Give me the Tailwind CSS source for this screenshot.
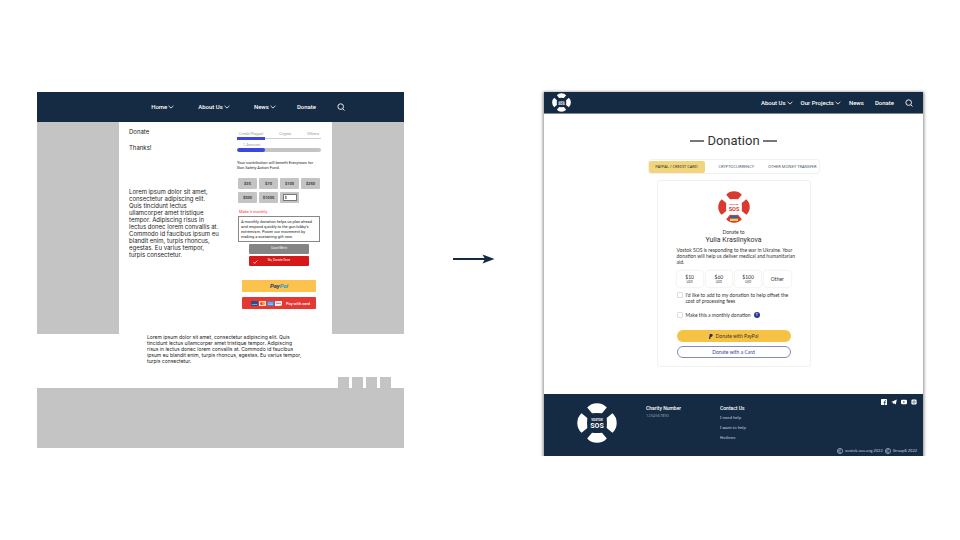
<!DOCTYPE html>
<html lang="en">
<head>
<meta charset="utf-8">
<meta name="viewport" content="width=device-width, initial-scale=1">
<title>Donation page: before and after</title>
<script src="https://cdn.jsdelivr.net/npm/@tailwindcss/browser@4"></script>
</head>
<body class="bg-white font-[Roboto,sans-serif] text-[#333]">
<svg class="hidden" aria-hidden="true">
  <symbol id="chevron" viewBox="0 0 6 4"><path d="M.6 .8 3 3.1 5.4 .8" fill="none" stroke="currentColor" stroke-width=".8"/></symbol>
  <symbol id="search" viewBox="0 0 8 8"><circle cx="3.7" cy="3.6" r="2.8" fill="none" stroke="currentColor" stroke-width=".9"/><path d="m5.8 5.8 1.7 1.7" stroke="currentColor" stroke-width=".9"/></symbol>
  <symbol id="ring" viewBox="0 0 40 40">
    <g fill="currentColor">
      <path id="petal" d="M10.200 4.600Q14 .3 20 .3T29.800 4.600L25 10.300Q20 9.800 15 10.300Z"/>
      <use href="#petal" transform="rotate(90 20 20)"/>
      <use href="#petal" transform="rotate(180 20 20)"/>
      <use href="#petal" transform="rotate(270 20 20)"/>
      <text x="20" y="18" font-size="3" font-weight="700" text-anchor="middle" font-family="Roboto">VOSTOK</text>
      <text x="20" y="24.500" font-size="7" font-weight="700" text-anchor="middle" font-family="Roboto">SOS</text>
    </g>
  </symbol>
</svg>

<main class="grid grid-cols-[367fr_140fr_379fr] items-start px-[37px] pt-[92px]">

  <!-- Old design -->
  <section class="bg-white" aria-label="Previous design">
    <nav class="flex h-[30px] items-center justify-end gap-[21px] bg-[#152b43] pr-[59px] text-[6px] font-medium leading-[8px] text-white">
      <a href="#" class="flex items-center gap-px">Home <svg class="h-[4px] w-[6px]"><use href="#chevron"/></svg></a>
      <a href="#" class="ml-[3px] flex items-center gap-px">About Us <svg class="h-[4px] w-[6px]"><use href="#chevron"/></svg></a>
      <a href="#" class="ml-[3px] flex items-center gap-px">News <svg class="h-[4px] w-[6px]"><use href="#chevron"/></svg></a>
      <a href="#">Donate</a>
      <button aria-label="Search"><svg class="block size-[8px]"><use href="#search"/></svg></button>
    </nav>

    <div class="grid grid-cols-[82fr_213fr_72fr]">
      <div class="bg-[#c4c4c4]"></div>
      <div class="flex justify-between pb-[25px] pl-[10px] pr-[11px]">
        <div class="whitespace-nowrap pt-[6px] font-[Inter,sans-serif] text-[6px] leading-[7px] text-[#222]">
          <h2>Donate</h2>
          <p class="mt-[9px]">Thanks!</p>
          <p class="mt-[37px]">Lorem ipsum dolor sit amet,<br>consectetur adipiscing elit.<br>Quis tincidunt lectus<br>ullamcorper amet tristique<br>tempor. Adipiscing risus in<br>lectus donec lorem convallis at.<br>Commodo id faucibus ipsum eu<br>blandit enim, turpis rhoncus,<br>egestas. Eu varius tempor,<br>turpis consectetur.</p>
        </div>
        <form class="w-[84px] pt-[8px] text-[4px] leading-[5px] text-[#222]">
          <div class="flex h-[6px] justify-between px-[2px] text-[#999]">
            <button type="button">Credit/Paypal</button><button type="button">Crypto</button><button type="button">Others</button>
          </div>
          <div class="flex h-[4px] items-center">
            <div class="h-[3px] w-1/3 bg-[#3d46dd]"></div><div class="h-px flex-1 bg-[#ccc]"></div>
          </div>
          <p class="mt-[2px] pl-[6px] text-[#999]">1 Amount</p>
          <div class="mt-px h-[4px] overflow-hidden rounded-full bg-[#c4c4c4]"><div class="h-full w-1/3 rounded-full bg-[#3d46dd]"></div></div>
          <p class="mt-[8px] whitespace-nowrap">Your contribution will benefit Everytown for<br>Gun Safety Action Fund.</p>
          <div class="mt-[8px] grid grid-cols-4 gap-x-[2px] gap-y-[3px] px-px font-medium">
            <button type="button" class="h-[11px] rounded-[1px] bg-[#c4c4c4]">$35</button>
            <button type="button" class="h-[11px] rounded-[1px] bg-[#c4c4c4]">$70</button>
            <button type="button" class="h-[11px] rounded-[1px] bg-[#c4c4c4]">$100</button>
            <button type="button" class="h-[11px] rounded-[1px] bg-[#c4c4c4]">$250</button>
            <button type="button" class="h-[11px] rounded-[1px] bg-[#c4c4c4]">$500</button>
            <button type="button" class="h-[11px] rounded-[1px] bg-[#c4c4c4]">$1000</button>
            <div class="flex h-[11px] items-center justify-center rounded-[1px] bg-[#c4c4c4]"><input aria-label="Other amount" value="$" class="h-[7px] w-[14px] border border-[#777] bg-white pl-px leading-[5px]"></div>
          </div>
          <p class="mt-[6px] pl-[2px] text-[#f33]">Make it monthly</p>
          <p class="mx-px mt-[2px] whitespace-nowrap border border-[#888] px-[2px] py-[2px]">A monthly donation helps us plan ahead<br>and respond quickly to the gun lobby's<br>extremism. Power our movement by<br>making a sustaining gift now.</p>
          <div class="mx-[12px] mt-[2px] grid gap-[2px] text-[3px] leading-[4px] text-white">
            <button type="button" class="h-[10px] rounded-[1px] bg-[#858585] pb-[2px]">Count Me In</button>
            <button type="button" class="grid h-[10px] grid-cols-[1fr_auto_1fr] items-center rounded-[1px] bg-[#d61818] px-[4px]">
              <svg class="mt-[1px] h-[4px] w-[5px]" viewBox="0 0 5 4" fill="none" stroke="white" stroke-width=".7"><path d="m.4 2 1.300 1.400L4.600.4"/></svg>
              <span class="pb-[2px]">No, Donate Once</span></button>
          </div>
          <div class="mx-[5px] mt-[14px] grid gap-[5px]">
            <button type="button" class="h-[12px] rounded-[1px] bg-[#fcc24c] text-[6px] font-bold italic leading-[8px] text-[#203a72]">Pay<span class="text-[#2a9bd0]">Pal</span></button>
            <button type="button" class="flex h-[12px] items-center gap-[4px] rounded-[1px] bg-[#e63832] pl-[9px] text-[4px] font-medium text-white">
              <svg class="h-[5px] w-[31px]" viewBox="0 0 31 5">
                <rect width="7" height="5" rx=".5" fill="#244f91"/><text x="3.500" y="3.500" font-size="2.500" fill="#fff" text-anchor="middle">VISA</text>
                <rect x="8" width="7" height="5" rx=".5" fill="#f6dfd0"/><circle cx="10.600" cy="2.500" r="1.600" fill="#e23a22"/><circle cx="12.500" cy="2.500" r="1.600" fill="#f0a020"/>
                <rect x="16" width="7" height="5" rx=".5" fill="#4c7fd8"/><path d="M17 2h5M17 3.400h5" stroke="#dbe7ff" stroke-width=".6"/>
                <rect x="24" width="7" height="5" rx=".5" fill="#f5f5f5"/><path d="M25 2.300h5" stroke="#777" stroke-width=".8"/><path d="M27 5q3 0 4-2v2z" fill="#f2a04a"/>
              </svg>
              <span class="whitespace-nowrap">Pay with card</span></button>
          </div>
        </form>
      </div>
      <div class="bg-[#c4c4c4]"></div>
    </div>

    <div class="flex h-[54px] justify-between pl-[110px] pr-[13px]">
      <p class="whitespace-nowrap font-[Inter,sans-serif] text-[5px] leading-[6px] text-[#222]">Lorem ipsum dolor sit amet, consectetur adipiscing elit. Quis<br>tincidunt lectus ullamcorper amet tristique tempor. Adipiscing<br>risus in lectus donec lorem convallis at. Commodo id faucibus<br>ipsum eu blandit enim, turpis rhoncus, egestas. Eu varius tempor,<br>turpis consectetur.</p>
      <div class="flex items-end gap-[3px]">
        <span class="size-[11px] bg-[#c4c4c4]"></span><span class="size-[11px] bg-[#c4c4c4]"></span><span class="size-[11px] bg-[#c4c4c4]"></span><span class="size-[11px] bg-[#c4c4c4]"></span>
      </div>
    </div>
    <footer class="h-[60px] bg-[#c4c4c4]"></footer>
  </section>

  <svg class="mt-[162px] h-[10px] w-[42px] justify-self-center text-[#152b43]" viewBox="0 0 42 10" role="img" aria-label="becomes"><path d="M0 5h34" stroke="currentColor" stroke-width="1.800"/><path d="M29.500.5 41.500 5l-12 4.500L32 5z" fill="currentColor"/></svg>

  <!-- New design -->
  <section class="bg-white shadow-[0_1px_3px_1px_rgba(0,0,0,0.45)]" aria-label="New design">
    <header class="flex h-[22px] items-center justify-between border-b border-[#7c8996] bg-[#152b43] pl-[8px] pr-[10px] text-white">
      <svg class="size-[19px]" role="img" aria-label="Vostok SOS"><use href="#ring"/></svg>
      <nav class="flex items-center gap-[8px] text-[6px] font-medium leading-[8px]">
        <a href="#" class="flex items-center gap-px">About Us <svg class="h-[4px] w-[6px]"><use href="#chevron"/></svg></a>
        <a href="#" class="flex items-center gap-px">Our Projects <svg class="h-[4px] w-[6px]"><use href="#chevron"/></svg></a>
        <a href="#">News</a>
        <a href="#" class="ml-[3px]">Donate</a>
        <button aria-label="Search" class="ml-[3px]"><svg class="block size-[8px]"><use href="#search"/></svg></button>
      </nav>
    </header>

    <div class="flex flex-col items-center pb-[27px] pt-[19px]">
      <h1 class="flex items-center gap-[3px] text-[13px] leading-[16px] text-[#333]"><span class="h-[2px] w-[14px] bg-[#777]"></span>Donation<span class="h-[2px] w-[14px] bg-[#777]"></span></h1>
      <div class="mt-[10px] flex h-[15px] w-[172px] items-center justify-between rounded-[3px] border border-[#f1f1f1] pr-[2px] font-['Noto_Sans',sans-serif] text-[4px] leading-[6px] text-[#48586c]">
        <button class="h-[12px] w-[56px] rounded-[2px] bg-[#f1d57c] text-[#333]">PAYPAL / CREDIT CARD</button>
        <button>CRYPTOCURRENCY</button>
        <button>OTHER MONEY TRANSFER</button>
      </div>

      <form class="mt-[6px] flex w-[154px] flex-col rounded-[3px] border border-[#f1f1f1] px-[19px] pb-[8px] pt-[10px] font-[Lato,sans-serif] text-[5px] leading-[6px]">
        <svg class="size-[32px] self-center text-[#d9392f]" viewBox="0 0 40 40" role="img" aria-label="Vostok SOS"><use href="#ring"/><path d="M15.500 31.500h9l.5 3.200H15z" fill="#2c5cb8"/><path d="M15 34.500h10v3H15z" fill="#f5cf3c"/></svg>
        <p class="mt-[6px] text-center">Donate to</p>
        <h2 class="mt-px text-center font-[Roboto,sans-serif] text-[7px] leading-[8px]">Yulia Krasilnykova</h2>
        <p class="mt-[3px] whitespace-nowrap">Vostok SOS is responding to the war in Ukraine. Your<br>donation will help us deliver medical and humanitarian<br>aid.</p>
        <div class="mt-[6px] grid grid-cols-4 gap-[3px] leading-[5px]">
          <button type="button" class="h-[16px] rounded-[2px] shadow-[0_0_2px_rgba(0,0,0,0.16)]">$10<span class="block text-[3px] leading-[4px]">USD</span></button>
          <button type="button" class="h-[16px] rounded-[2px] shadow-[0_0_2px_rgba(0,0,0,0.16)]">$60<span class="block text-[3px] leading-[4px]">USD</span></button>
          <button type="button" class="h-[16px] rounded-[2px] shadow-[0_0_2px_rgba(0,0,0,0.16)]">$100<span class="block text-[3px] leading-[4px]">USD</span></button>
          <button type="button" class="h-[16px] rounded-[2px] shadow-[0_0_2px_rgba(0,0,0,0.16)]">Other</button>
        </div>
        <label class="mt-[5px] flex gap-[3px] whitespace-nowrap"><input type="checkbox" class="size-[6px] appearance-none rounded-[1px] border border-[#ddd]"><span>I'd like to add to my donation to help offset the<br>cost of processing fees</span></label>
        <div class="mt-[8px] flex items-center gap-[3px]"><input id="monthly" type="checkbox" class="size-[6px] appearance-none rounded-[1px] border border-[#ddd]"><label for="monthly">Make this a monthly donation</label><button type="button" aria-label="About monthly donations" class="size-[6px] rounded-full bg-[#2c3a96] text-[4px] font-bold text-white">?</button></div>
        <button type="button" class="mt-[12px] flex h-[12px] items-center justify-center gap-[3px] rounded-full bg-[#f6c244]"><svg class="h-[5px] w-[4px]" viewBox="0 0 4 5"><path d="M.8 0h1.700Q4 .1 3.700 1.600 3.300 3 1.900 3.100h-.3L1.300 5H0z" fill="#1c2c60"/></svg>Donate with PayPal</button>
        <button type="button" class="mt-[4px] h-[12px] rounded-full border border-[#8289bd] text-[#3b4494]">Donate with a Card</button>
      </form>
    </div>

    <footer class="flex h-[62px] bg-[#152b43] pl-[33px] pr-[6px] font-['Noto_Sans',sans-serif] text-white">
      <svg class="mt-[9px] size-[40px]" role="img" aria-label="Vostok SOS"><use href="#ring"/></svg>
      <div class="ml-[29px] w-[74px] pt-[10px] text-[4px] leading-[6px]">
        <h3 class="font-[Roboto,sans-serif] text-[5px] font-medium leading-[8px]">Charity Number</h3>
        <p class="mt-px text-[#8d99a6]">1234567890</p>
      </div>
      <div class="pt-[10px] text-[4px] leading-[6px]">
        <h3 class="font-[Roboto,sans-serif] text-[5px] font-medium leading-[8px]">Contact Us</h3>
        <ul class="mt-[3px] grid gap-[4px] text-[#d6dce2]"><li><a href="#">I need help</a></li><li><a href="#">I want to help</a></li><li><a href="#">Hotlines</a></li></ul>
      </div>
      <div class="ml-auto flex flex-col items-end justify-between pb-[2px] pt-[5px]">
        <div class="flex gap-[4px]">
          <a href="#" aria-label="Facebook"><svg class="block size-[6px]" viewBox="0 0 6 6"><rect width="6" height="6" rx=".6" fill="#fff"/><path d="M3.600 6V2.300q0-.8 1.400-.7M2.600 3.400h2.300" fill="none" stroke="#152b43" stroke-width=".7"/></svg></a>
          <a href="#" aria-label="Telegram"><svg class="block size-[6px]" viewBox="0 0 6 6"><path d="M.2 2.900 5.800.6 4.800 5.500 3 4.200l-1 .9-.2-1.600z" fill="#fff"/></svg></a>
          <a href="#" aria-label="YouTube"><svg class="block size-[6px]" viewBox="0 0 6 6"><rect y=".8" width="6" height="4.500" rx="1.300" fill="#fff"/><path d="m2.400 2 1.600 1-1.600 1z" fill="#152b43"/></svg></a>
          <a href="#" aria-label="Instagram"><svg class="block size-[6px]" viewBox="0 0 6 6"><rect x=".4" y=".4" width="5.200" height="5.200" rx="1.300" fill="#fff"/><circle cx="3" cy="3" r="1.200" fill="none" stroke="#152b43" stroke-width=".6"/></svg></a>
        </div>
        <p class="flex items-center gap-[2px] text-[4px] leading-[6px] text-[#d6dce2]">
          <svg class="size-[6px]" viewBox="0 0 6 6" fill="none" stroke="currentColor" stroke-width=".6"><circle cx="3" cy="3" r="2.600"/><path d="M4 2.200a1.300 1.300 0 1 0 0 1.600"/></svg>vostok-sos.org 2022
          <svg class="size-[6px]" viewBox="0 0 6 6" fill="none" stroke="currentColor" stroke-width=".6"><circle cx="3" cy="3" r="2.600"/><path d="M4 2.200a1.300 1.300 0 1 0 0 1.600"/></svg>Group6 2022
        </p>
      </div>
    </footer>
  </section>
</main>
</body>
</html>
